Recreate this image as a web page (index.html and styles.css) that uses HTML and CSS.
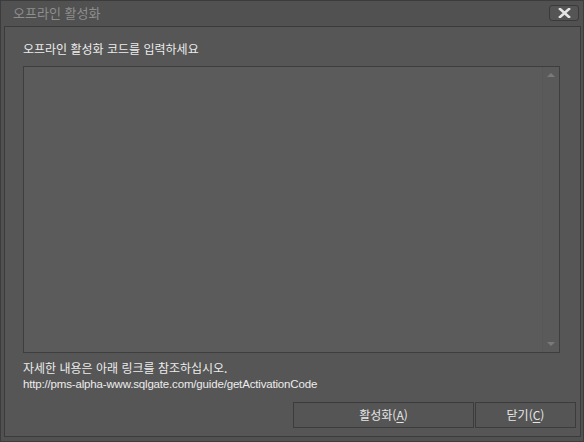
FILE: index.html
```html
<!DOCTYPE html>
<html lang="ko">
<head>
<meta charset="utf-8">
<link rel="stylesheet" href="styles.css">
</head>
<body>
<div class="window">
  <div class="titlebar">
    <span class="title">오프라인 활성화</span>
    <button class="close-x" type="button" aria-label="닫기">
      <svg width="13" height="10" viewBox="0 0 13 10"><path d="M2 1 L11 9 M11 1 L2 9" stroke="#e6e6e6" stroke-width="2.6" stroke-linecap="square"/></svg>
    </button>
  </div>
  <div class="panel">
    <div class="label">오프라인 활성화 코드를 입력하세요</div>
    <div class="codebox">
      <div class="code-area"></div>
      <div class="scrollbar">
        <span class="arrow up"></span>
        <span class="arrow down"></span>
      </div>
    </div>
    <div class="info">
      <div class="info-line">자세한 내용은 아래 링크를 참조하십시오.</div>
      <div class="info-line url">http://pms-alpha-www.sqlgate.com/guide/getActivationCode</div>
    </div>
    <div class="buttons">
      <button class="btn btn-activate" type="button">활성화(<u>A</u>)</button>
      <button class="btn btn-close" type="button">닫기(<u>C</u>)</button>
    </div>
  </div>
</div>
</body>
</html>
```
FILE: styles.css
```css
* { box-sizing: border-box; }
html, body { margin: 0; padding: 0; }
body {
  width: 584px;
  height: 442px;
  background: #4d4d4d;
  font-family: "Noto Sans CJK KR", "Noto Sans", sans-serif;
  overflow: hidden;
}
.window {
  width: 584px;
  height: 442px;
  background: #515151;
  border: 1px solid #3c3c3c;
  display: flex;
  flex-direction: column;
  padding: 0 2px 4px 3px;
}
.titlebar {
  height: 25px;
  display: flex;
  align-items: center;
  justify-content: space-between;
  padding-left: 9px;
  padding-right: 2px;
}
.title {
  font-size: 13px;
  color: #8e8e8e;
  line-height: 1;
  margin-top: -2px;
}
.close-x {
  width: 30px;
  height: 16px;
  border: 1px solid #3a3a3a;
  border-radius: 3px;
  background: #555555;
  padding: 0;
  display: flex;
  align-items: center;
  justify-content: center;
  margin-top: -1px;
}
.panel {
  flex: 1;
  border: 1px solid #3b3b3b;
  background: #565656;
  display: flex;
  flex-direction: column;
  padding: 0 4px 8px 18px;
}
.label {
  margin-top: 14px;
  font-size: 12px;
  line-height: 16px;
  color: #ececec;
}
.codebox {
  margin-top: 9px;
  margin-right: 16px;
  height: 287px;
  border: 1px solid #3e3e3e;
  display: flex;
  background: #5b5b5b;
}
.code-area { flex: 1; }
.scrollbar {
  width: 17px;
  background: #5a5a5a;
  border-left: 1px solid #575757;
  display: flex;
  flex-direction: column;
  justify-content: space-between;
  align-items: center;
  padding: 6px 0 6px;
}
.arrow {
  width: 0;
  height: 0;
  border-left: 4px solid transparent;
  border-right: 4px solid transparent;
}
.arrow.up { border-bottom: 4px solid #7a7a7a; }
.arrow.down { border-top: 4px solid #7a7a7a; }
.info {
  margin-top: 6px;
  font-size: 12px;
  line-height: 17px;
  color: #ececec;
}
.url {
  font-family: "Liberation Sans", "Noto Sans", sans-serif;
  font-size: 11.5px;
  letter-spacing: -0.17px;
}
.buttons {
  margin-top: auto;
  display: flex;
  justify-content: flex-end;
  gap: 1px;
}
.btn {
  height: 26px;
  border: 1px solid #3c3c3c;
  background: #555555;
  color: #e6e6e6;
  font-family: "Noto Sans CJK KR", "Noto Sans", sans-serif;
  font-size: 12px;
  padding: 0;
  line-height: 24px;
}
.btn u { text-underline-offset: 2px; }
.btn-activate { width: 181px; }
.btn-close { width: 101px; }
```
